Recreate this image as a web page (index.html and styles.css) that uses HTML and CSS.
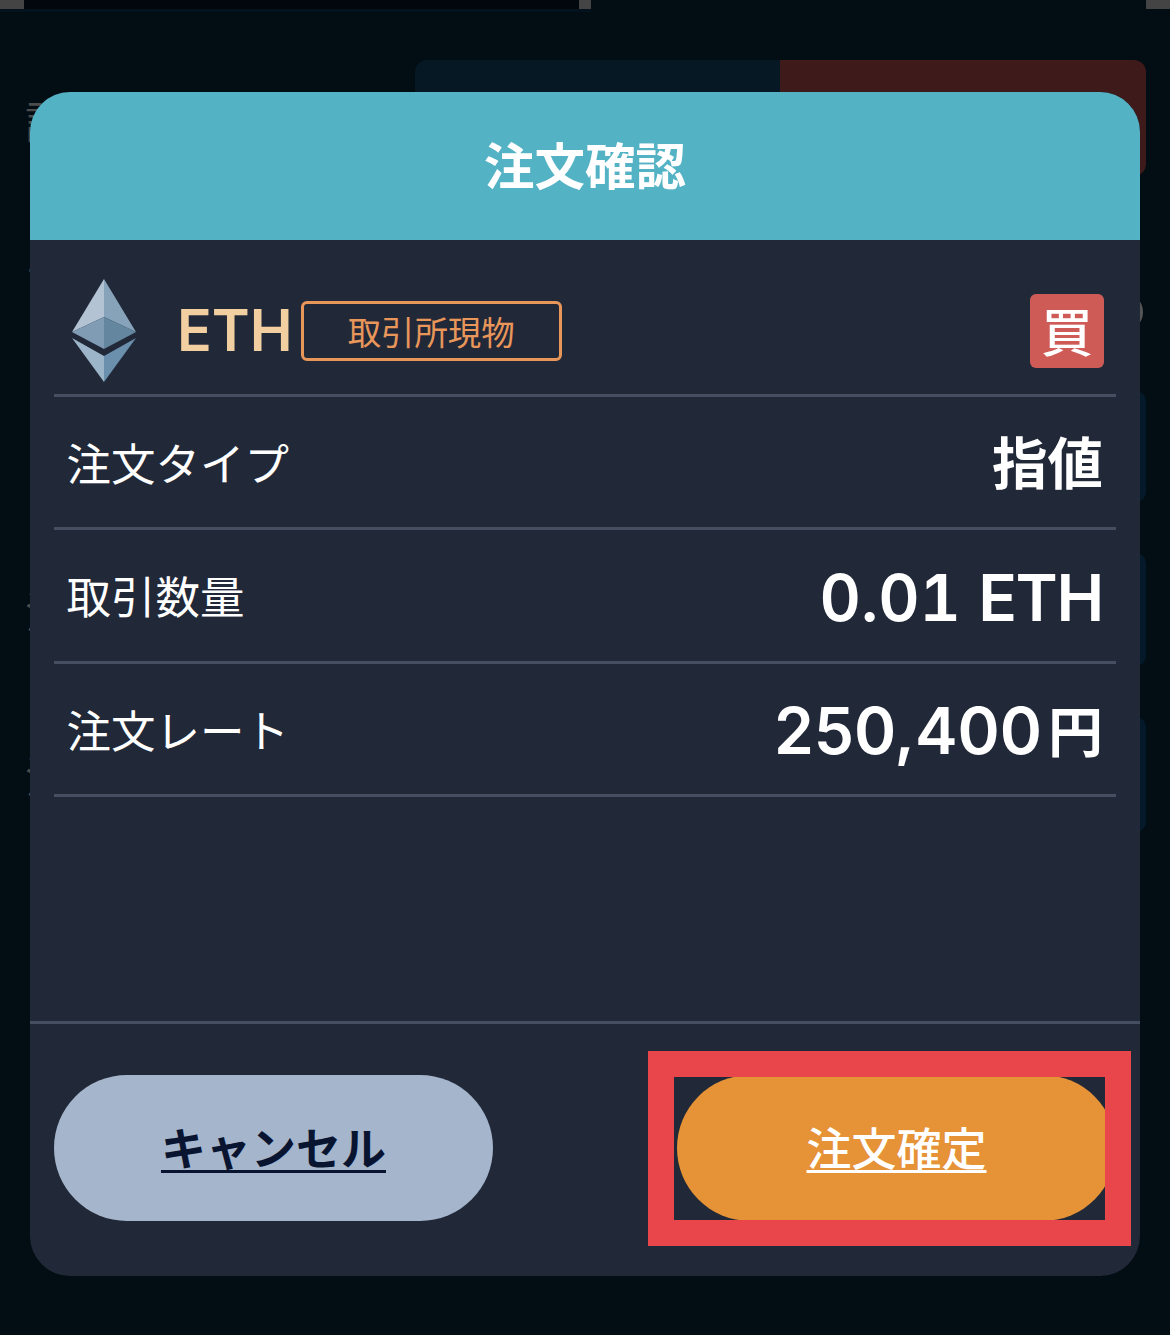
FILE: index.html
```html
<!DOCTYPE html>
<html lang="ja">
<head>
<meta charset="utf-8">
<title>注文確認</title>
<link rel="stylesheet" href="styles.css">
</head>
<body>
<div class="backdrop" aria-hidden="true">
  <div class="tab-left"></div>
  <div class="tab-bar"><span class="tab-buy"></span><span class="tab-sell"></span></div>
  <span class="corner"></span>
  <span class="ghost ghost-1">試</span>
  <span class="ghost ghost-2">了</span>
  <span class="ghost ghost-3">注</span>
  <span class="ghost ghost-4">注</span>
  <span class="knob"></span>
  <span class="field field-1"></span>
  <span class="field field-2"></span>
  <span class="field field-3"></span>
</div>
<main class="modal">
  <header class="modal-head">注文確認</header>
  <section class="modal-body">
    <div class="asset">
      <svg class="eth-icon" viewBox="0 0 65 103" aria-hidden="true">
        <polygon points="32,0 32,38 0,53" fill="#b3c3d3"/>
        <polygon points="32,0 32,38 64,53" fill="#87a3b9"/>
        <polygon points="0,53 32,38 32,70" fill="#7f9cb4"/>
        <polygon points="64,53 32,38 32,70" fill="#64879f"/>
        <polygon points="0,59 32,77 32,103" fill="#9db5c9"/>
        <polygon points="64,59 32,77 32,103" fill="#6a90ae"/>
      </svg>
      <span class="asset-name">ETH</span>
      <span class="chip">取引所現物</span>
      <span class="side">買</span>
    </div>
    <div class="row"><span class="label">注文タイプ</span><span class="value value-bold">指値</span></div>
    <div class="row"><span class="label">取引数量</span><span class="value value-tabular">0.01 <span class="unit">ETH</span></span></div>
    <div class="row"><span class="label">注文レート</span><span class="value">250,400<span class="yen">円</span></span></div>
  </section>
  <footer class="modal-foot">
    <a class="btn btn-cancel"><span class="btn-text">キャンセル</span></a>
    <a class="btn btn-confirm"><span class="btn-text">注文確定</span></a>
    <span class="highlight"></span>
  </footer>
</main>
</body>
</html>
```
FILE: styles.css
```css
html, body {
  margin: 0;
  padding: 0;
}
body {
  position: relative;
  width: 1170px;
  height: 1335px;
  overflow: hidden;
  background: #020d14;
  font-family: "Noto Sans CJK JP", "Noto Sans", sans-serif;
  color: #fff;
}
.backdrop {
  position: absolute;
  inset: 0;
}
.tab-left {
  position: absolute;
  left: 0;
  top: 0;
  width: 555px;
  height: 9px;
  background: #01070d;
  border-left: 24px solid #444;
  border-right: 12px solid #444;
  box-shadow: 0 3px 0 #03121c;
}
.corner {
  position: absolute;
  top: 0;
  left: 1146px;
  width: 24px;
  height: 9px;
  background: #444;
}
.tab-bar {
  position: absolute;
  left: 415px;
  top: 60px;
  width: 731px;
  height: 116px;
  display: flex;
  border-radius: 12px;
  overflow: hidden;
}
.tab-buy { flex: 365; background: #051824; }
.tab-sell { flex: 366; background: #3e1a1a; }
.ghost {
  position: absolute;
  left: 25px;
  font-size: 44px;
  line-height: 44px;
  color: #4c4c4c;
}
.ghost-1 { top: 98px; }
.ghost-2 { top: 262px; }
.ghost-3 { top: 588px; }
.ghost-4 { top: 753px; }
.knob {
  position: absolute;
  left: 1110px;
  top: 294px;
  width: 33px;
  height: 36px;
  border-radius: 50%;
  background: #555;
}
.field {
  position: absolute;
  left: 1100px;
  width: 46px;
  background: #04192a;
  border-radius: 10px;
}
.field-1 { top: 391px; height: 111px; }
.field-2 { top: 553px; height: 113px; }
.field-3 { top: 717px; height: 115px; }

.modal {
  position: absolute;
  left: 30px;
  top: 92px;
  width: 1110px;
  height: 1184px;
  display: flex;
  flex-direction: column;
  border-radius: 40px;
  overflow: hidden;
  background: #212838;
}
.modal-head {
  height: 148px;
  flex: none;
  box-sizing: border-box;
  padding-bottom: 6px;
  display: flex;
  align-items: center;
  justify-content: center;
  background: #54b2c5;
  font-size: 50.5px;
  font-weight: 700;
  line-height: 1;
}
.modal-body {
  flex: 1;
  padding: 0 24px;
}
.asset {
  height: 157px;
  box-sizing: border-box;
  padding: 27px 12px 0 18px;
  display: flex;
  align-items: center;
  border-bottom: 3px solid #464f61;
}
.eth-icon {
  width: 65px;
  height: 103px;
  flex: none;
}
.asset-name {
  margin-left: 40px;
  font-family: Inter, "Noto Sans", sans-serif;
  font-size: 57.5px;
  font-weight: 600;
  line-height: 1;
  color: #f2cfa0;
}
.chip {
  margin-left: 8px;
  margin-top: 1px;
  width: 261px;
  height: 60px;
  box-sizing: border-box;
  display: flex;
  align-items: center;
  justify-content: center;
  border: 3px solid #e8965a;
  border-radius: 6px;
  font-size: 33.4px;
  font-weight: 400;
  color: #e8965a;
  line-height: 1;
}
.side {
  margin-left: auto;
  margin-top: 1px;
  width: 74px;
  height: 74px;
  box-sizing: border-box;
  padding-bottom: 3px;
  display: flex;
  align-items: center;
  justify-content: center;
  background: #cf5b57;
  border-radius: 6px;
  font-size: 52px;
  font-weight: 500;
  line-height: 1;
}
.row {
  height: 133.4px;
  box-sizing: border-box;
  padding: 0 13px 0 12.5px;
  display: flex;
  align-items: center;
  justify-content: space-between;
  border-bottom: 3px solid #464f61;
}
.label {
  font-size: 44.5px;
  line-height: 1;
  font-weight: 400;
}
.value {
  margin-top: 4px;
  font-family: Inter, "Noto Sans CJK JP", sans-serif;
  font-size: 64px;
  font-weight: 600;
  line-height: 1;
}
.value-tabular {
  font-variant-numeric: tabular-nums;
}
.unit {
  letter-spacing: -1.3px;
}
.value-bold {
  margin-top: -2px;
  font-family: "Noto Sans CJK JP", sans-serif;
  font-size: 55.5px;
  font-weight: 700;
}
.yen {
  position: relative;
  top: -2px;
  font-family: "Noto Sans CJK JP", sans-serif;
  font-size: 55px;
  font-weight: 700;
  margin-left: 6px;
}
.modal-foot {
  position: relative;
  height: 255px;
  flex: none;
  box-sizing: border-box;
  padding: 51px 24px 0;
  display: flex;
  justify-content: space-between;
  border-top: 3px solid #464f61;
}
.btn {
  width: 439px;
  height: 146px;
  display: flex;
  align-items: center;
  justify-content: center;
  border-radius: 73px;
  line-height: 1;
}
.btn-text {
  display: block;
  margin-bottom: 4px;
  text-decoration: underline;
  text-decoration-thickness: 3px;
  text-underline-offset: 4px;
}
.btn-cancel {
  background: #a5b5cc;
  color: #081430;
  font-size: 45px;
  font-weight: 700;
}
.btn-confirm {
  background: #e69237;
  color: #fff;
  font-size: 45px;
  font-weight: 500;
}
.highlight {
  position: absolute;
  left: 618px;
  top: 27px;
  width: 431px;
  height: 143px;
  border: 26px solid #e9464b;
}
```
